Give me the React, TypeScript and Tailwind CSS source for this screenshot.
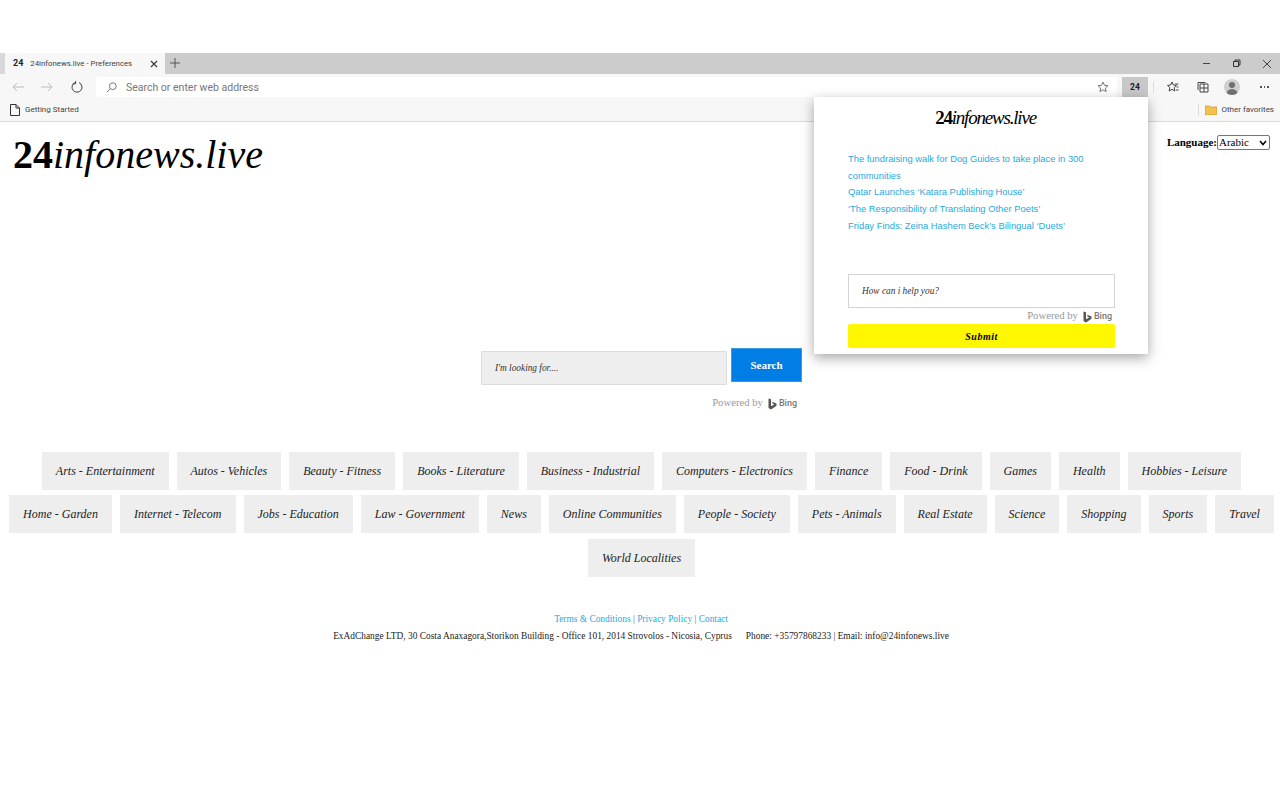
import React from "react";

const serif = "font-['Liberation_Serif',serif]";
const ui = "font-['Roboto',sans-serif]";

const rows = [
  ["Arts - Entertainment", "Autos - Vehicles", "Beauty - Fitness", "Books - Literature", "Business - Industrial", "Computers - Electronics", "Finance", "Food - Drink", "Games", "Health", "Hobbies - Leisure"],
  ["Home - Garden", "Internet - Telecom", "Jobs - Education", "Law - Government", "News", "Online Communities", "People - Society", "Pets - Animals", "Real Estate", "Science", "Shopping", "Sports", "Travel"],
  ["World Localities"],
];

function BingMark() {
  return (
    <span className={`inline-flex items-center gap-[2px] mt-[3px] ${ui} text-[9px] font-medium text-[#777]`}>
      <svg width="9" height="12" viewBox="0 0 9 12" className="text-[#555]">
        <path d="M0.5 0.5 L3 1.3 V8.3 L6.3 6.5 L4.8 5.7 L4 3.8 L8.5 5.4 V7.8 L3 11.5 L0.5 10 Z" fill="currentColor" />
      </svg>
      Bing
    </span>
  );
}

function Powered() {
  return (
    <span className={`inline-flex items-center gap-[5px] ${serif} text-[10.7px] text-[#999]`}>
      Powered by <BingMark />
    </span>
  );
}

function Chrome() {
  return (
    <div className={`${ui} text-[#444]`}>
      <div className="h-[21px] bg-[#cccccc] flex items-end">
        <div className="w-[5px] h-[21px] bg-[#d8d8d8]" />
        <div className="w-[160px] h-[21px] bg-[#f7f7f7] flex items-center pl-[8px] pr-[7px] text-[7.8px]">
          <span className="font-bold text-[9px] mr-[7px] text-[#222]">24</span>
          <span className="flex-1 whitespace-nowrap">24infonews.live - Preferences</span>
          <svg width="8" height="8" viewBox="0 0 8 8" stroke="#333" strokeWidth="1.1"><path d="M1 1 L7 7 M7 1 L1 7" /></svg>
        </div>
        <svg width="10" height="10" viewBox="0 0 10 10" stroke="#555" className="ml-[5px] mb-[6px]"><path d="M5 0 V10 M0 5 H10" /></svg>
        <div className="flex-1" />
        <div className="flex items-center gap-[21px] pr-[8px] self-center">
          <svg width="9" height="9" viewBox="0 0 9 9" stroke="#444"><path d="M1 4.5 H8" /></svg>
          <svg width="9" height="9" viewBox="0 0 9 9" fill="none" stroke="#333"><path d="M1.5 2.5 H6.5 V7.5 H1.5 Z M3 2.5 V1 H8 V6 H6.5" /></svg>
          <svg width="10" height="10" viewBox="0 0 10 10" stroke="#444"><path d="M1 1 L9 9 M9 1 L1 9" /></svg>
        </div>
      </div>
      <div className="h-[24px] pt-[2px] bg-[#f7f7f7] flex items-center">
        <div className="w-[96px] flex items-center pl-[12px] gap-[17px] shrink-0">
          <svg width="12" height="10" viewBox="0 0 12 10" fill="none" stroke="#bbb"><path d="M12 5 H1 M5 1 L1 5 L5 9" /></svg>
          <svg width="12" height="10" viewBox="0 0 12 10" fill="none" stroke="#bbb"><path d="M0 5 H11 M7 1 L11 5 L7 9" /></svg>
          <svg width="12" height="12" viewBox="0 0 12 12" fill="none" stroke="#444" className="ml-px"><path d="M4 1.6 A5 5 0 1 0 8 1.6 M4.6 0 V2.8 H1.8" /></svg>
        </div>
        <div className="w-[1021px] h-[20px] bg-white rounded-[2px] flex items-center pl-[10px] pr-[8px] text-[10.5px] text-[#777]">
          <svg width="11" height="11" viewBox="0 0 11 11" fill="none" stroke="#777" className="mr-[9px]"><circle cx="6.8" cy="4.2" r="3.4" /><path d="M4.4 6.6 L0.8 10.2" /></svg>
          <span className="flex-1 pt-px">Search or enter web address</span>
          <svg width="12" height="12" viewBox="0 0 12 12" fill="none" stroke="#666" strokeWidth="0.9"><path d="M6 1 L7.5 4.3 L11 4.7 L8.4 7 L9.1 10.6 L6 8.8 L2.9 10.6 L3.6 7 L1 4.7 L4.5 4.3 Z" /></svg>
        </div>
        <div className="w-[26px] h-[20px] bg-[#c8c8c8] ml-[5px] flex items-center justify-center text-[8.5px] font-bold text-[#222]">24</div>
        <div className="w-px h-[12px] bg-[#ddd] ml-[5px]" />
        <div className="flex items-center ml-[13px] gap-[18px]">
          <svg width="12" height="12" viewBox="0 0 12 12" fill="none" stroke="#333" strokeWidth="0.9"><path d="M5 1 L6.3 4 L9.5 4.4 L7.2 6.5 L7.8 10 L5 8.3 L2.2 10 L2.8 6.5 L0.5 4.4 L3.7 4 Z" /><path d="M8 3 H11.5 M9.5 6 H11.5 M9 9 H11.5" /></svg>
          <svg width="12" height="12" viewBox="0 0 12 12" fill="none" stroke="#333" strokeWidth="0.9"><path d="M3 3 H11 V11 H3 Z M3 7 H11 M7 3 V11" /><path d="M1 9 V1.5 H8.5" /></svg>
          <span className="w-[16px] h-[16px] rounded-full bg-[#cfcfcf] overflow-hidden flex flex-col items-center -ml-[3px]">
            <span className="w-[6px] h-[6px] rounded-full bg-[#707070] mt-[3px]" />
            <span className="w-[12px] h-[6px] rounded-t-full bg-[#707070] mt-[1px]" />
          </span>
          <span className="flex gap-[2px] ml-[2px]">
            <span className="w-[1.5px] h-[1.5px] bg-[#555]" />
            <span className="w-[1.5px] h-[1.5px] bg-[#555]" />
            <span className="w-[1.5px] h-[1.5px] bg-[#555]" />
          </span>
        </div>
      </div>
      <div className="h-[24px] bg-[#f7f7f7] border-b border-[#d9d9d9] flex items-center px-[10px] text-[8px]">
        <svg width="10" height="12" viewBox="0 0 10 12" fill="none" stroke="#333" className="mr-[5px]"><path d="M0.5 0.5 H6 L9.5 4 V11.5 H0.5 Z M6 0.5 V4 H9.5" /></svg>
        <span className="flex-1">Getting Started</span>
        <div className="w-px h-[12px] bg-[#ddd] mr-[6px]" />
        <svg width="12" height="10" viewBox="0 0 12 10" className="mr-[4px]"><path d="M0 1 H4.5 L5.5 2 H12 V10 H0 Z" fill="#f2c14e" stroke="#c99a2e" strokeWidth="0.7" /></svg>
        <span className="-mr-[4px]">Other favorites</span>
      </div>
    </div>
  );
}

function Popup() {
  const links = [
    "The fundraising walk for Dog Guides to take place in 300 communities",
    "Qatar Launches ‘Katara Publishing House’",
    "‘The Responsibility of Translating Other Poets’",
    "Friday Finds: Zeina Hashem Beck’s Bilingual ‘Duets’",
  ];
  return (
    <div className={`absolute left-[814px] top-[97px] w-[334px] h-[257px] bg-white shadow-[0_4px_12px_rgba(0,0,0,0.35)] pl-[34px] pr-[33px] ${serif}`}>
      <div className="text-center text-[19px] leading-[24px] pt-[9px] pl-[8px] tracking-[-1.2px] text-black">
        <b>24</b><i>infonews.live</i>
      </div>
      <div className="mt-[21px] font-['Liberation_Sans',sans-serif] text-[9.4px] leading-[16.7px] text-[#29a9e0] pr-[28px] h-[123px]">
        {links.map((l) => <div key={l}>{l}</div>)}
      </div>
      <div className="h-[34px] border border-[#d4d4d4] flex items-center pl-[13px] pt-px text-[9.3px] italic text-[#333]">How can i help you?</div>
      <div className="h-[16px] flex justify-end items-center pr-[3px] pb-[2px]"><Powered /></div>
      <div className="h-[24px] pt-px bg-[#fff700] rounded-[2px] flex items-center justify-center text-[10px] font-bold italic tracking-[0.5px] text-black">Submit</div>
    </div>
  );
}

export default function App() {
  return (
    <div className={`relative w-[1280px] h-[800px] overflow-hidden bg-white ${serif}`}>
      <div className="h-[53px]" />
      <Chrome />
      <div className="flex justify-between h-[226px]">
        <div className="pl-[13px] pt-[7px] text-[40px] leading-[52px] text-black"><b>24</b><i>infonews.live</i></div>
        <div className="flex items-start pt-[13px] pr-[10px] text-[11px] text-black">
          <b className="leading-[15px]">Language:</b>
          <div className="w-[53px] h-[15px] border border-[#767676] rounded-[2px] flex items-center justify-between pl-[1px] pr-[2px] text-[11px] leading-none">
            Arabic
            <svg width="8" height="6" viewBox="0 0 8 6" fill="none" stroke="#000" strokeWidth="1.5"><path d="M1 1 L4 4.5 L7 1" /></svg>
          </div>
        </div>
      </div>
      <div className="flex justify-center items-start gap-[4px] pl-[3px]">
        <div className="w-[246px] h-[34px] mt-[3px] bg-[#eeeeee] border border-[#dcdcdc] flex items-center pl-[13px] pt-px text-[9.3px] italic text-[#333]">I'm looking for....</div>
        <div className="w-[71px] h-[34px] bg-[#007ee5] border border-[#3a9be8] flex items-center justify-center text-[11px] font-bold text-white">Search</div>
      </div>
      <div className="flex justify-end w-[797px] h-[16px] mt-[9px] items-center"><Powered /></div>
      <div className="mt-[42px] flex flex-col items-center pl-[3px]">
        {rows.map((r, i) => (
          <div key={i} className={`flex justify-center gap-[8px] h-[38px] ${i === 0 ? "mb-[5px]" : "mb-[6px]"}`}>
            {r.map((c) => (
              <div key={c} className="h-[38px] bg-[#eeeeee] px-[14px] flex items-center text-[12px] italic text-[#222] whitespace-nowrap">{c}</div>
            ))}
          </div>
        ))}
      </div>
      <div className="mt-[28px] text-center text-[9.4px] leading-[17px] pl-[2px]">
        <div className="text-[#29a9e0]">Terms &amp; Conditions <span className="text-[#666]">|</span> Privacy Policy <span className="text-[#666]">|</span> Contact</div>
        <div className="text-[#222] whitespace-pre">ExAdChange LTD, 30 Costa Anaxagora,Storikon Building - Office 101, 2014 Strovolos - Nicosia, Cyprus      Phone: +35797868233 | Email: info@24infonews.live</div>
      </div>
      <Popup />
    </div>
  );
}
